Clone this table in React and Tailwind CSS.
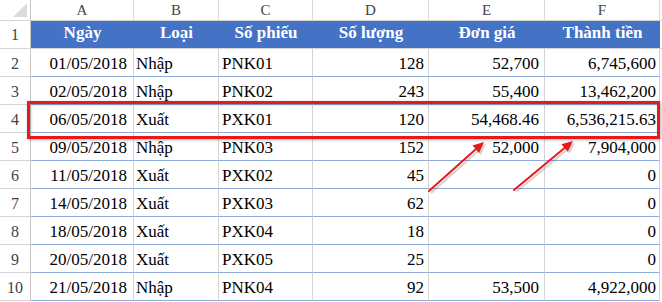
import React from "react";

const rows = [
  ["01/05/2018", "Nhập", "PNK01", "128", "52,700", "6,745,600"],
  ["02/05/2018", "Nhập", "PNK02", "243", "55,400", "13,462,200"],
  ["06/05/2018", "Xuất", "PXK01", "120", "54,468.46", "6,536,215.63"],
  ["09/05/2018", "Nhập", "PNK03", "152", "52,000", "7,904,000"],
  ["11/05/2018", "Xuất", "PXK02", "45", "", "0"],
  ["14/05/2018", "Xuất", "PXK03", "62", "", "0"],
  ["18/05/2018", "Xuất", "PXK04", "18", "", "0"],
  ["20/05/2018", "Xuất", "PXK05", "25", "", "0"],
  ["21/05/2018", "Nhập", "PNK04", "92", "53,500", "4,922,000"],
];

const letters = ["A", "B", "C", "D", "E", "F"];
const widths = ["w-[103px]", "w-[85px]", "w-[94px]", "w-[116px]", "w-[116px]", "w-[115px]"];
const titles = ["Ngày", "Loại", "Số phiếu", "Số lượng", "Đơn giá", "Thành tiền"];
// A, D, E, F are right aligned, B and C left
const align = ["justify-end pr-[6px]", "justify-start pl-[2px]", "justify-start pl-[3px]", "justify-end pr-[4px]", "justify-end pr-[5px]", "justify-end pr-[3px]"];

function Arrow({ x1, y1, x2, y2 }) {
  const a = Math.atan2(y2 - y1, x2 - x1);
  const len = 11;
  const w = 5;
  const bx = x2 - len * Math.cos(a);
  const by = y2 - len * Math.sin(a);
  const px = -Math.sin(a) * w;
  const py = Math.cos(a) * w;
  const head = `${x2},${y2} ${bx + px},${by + py} ${bx - px},${by - py}`;
  return (
    <g>
      <g transform="translate(2,2)" opacity="0.25">
        <line x1={x1} y1={y1} x2={bx} y2={by} stroke="#555" strokeWidth="2" />
        <polygon points={head} fill="#555" />
      </g>
      <line x1={x1} y1={y1} x2={bx} y2={by} stroke="#e8191b" strokeWidth="2" strokeLinecap="round" />
      <polygon points={head} fill="#e8191b" />
    </g>
  );
}

export default function App() {
  return (
    <div className="relative w-[662px] h-[302px] bg-white overflow-hidden [font-family:Liberation_Serif,serif] text-black">
      <div className="flex h-[21px] border-b border-[#d4d4d4] text-[15px] text-[#444]">
        <div className="relative w-[31px] border-r border-[#c6c6c6]">
          <svg className="absolute left-0 top-0" width="30" height="20">
            <polygon points="27,3 27,17 13,17" fill="#dcdcdc" />
          </svg>
        </div>
        {letters.map((l, i) => (
          <div key={l} className={`${widths[i]} border-r border-[#dadada] flex items-center justify-center leading-none pt-[1px]`}>
            {l}
          </div>
        ))}
      </div>

      <div className="flex h-[28px] border-b border-[#d4d4d4]">
        <div className="w-[31px] border-r border-[#c6c6c6] flex items-end justify-center pb-[5px] text-[16px] text-[#444] leading-none">1</div>
        <div className="flex bg-[#4472c4] text-white font-bold text-[17px] leading-none">
          {titles.map((t, i) => (
            <div key={t} className={`${widths[i]} flex items-end justify-center pb-[7px]`}>{t}</div>
          ))}
        </div>
      </div>

      {rows.map((r, ri) => (
        <div key={ri} className="flex h-[28px]">
          <div className="w-[31px] border-r border-b border-[#d4d4d4] border-r-[#c6c6c6] flex items-end justify-center pb-[4px] text-[16px] text-[#444] leading-none">
            {ri + 2}
          </div>
          {r.map((c, ci) => (
            <div key={ci} className={`${widths[ci]} border-r border-[#d4d4d4] border-b border-b-[#8eaadb] flex items-end ${align[ci]} pb-[4px] text-[17px] leading-none whitespace-nowrap`}>
              {c}
            </div>
          ))}
        </div>
      ))}

      <div className="absolute left-[27px] top-[101px] w-[633px] h-[38px] border-[3px] border-[#e8191b] shadow-[1px_1px_3px_rgba(0,0,0,0.3),inset_1px_1px_3px_rgba(0,0,0,0.2)]" />

      <svg className="absolute left-0 top-0" width="662" height="302">
        <Arrow x1={429} y1={191} x2={484} y2={142} />
        <Arrow x1={514} y1={190} x2={573} y2={141} />
      </svg>
    </div>
  );
}
